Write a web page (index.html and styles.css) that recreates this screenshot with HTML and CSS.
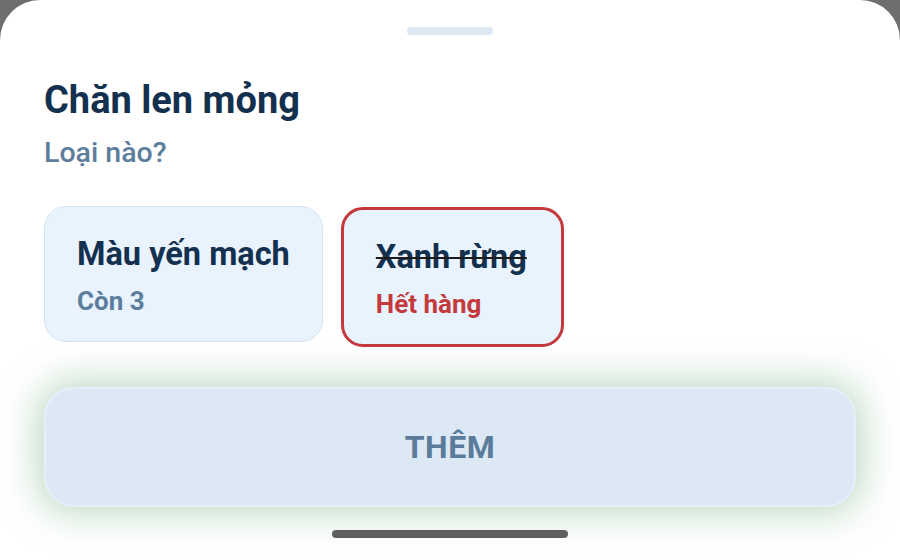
FILE: index.html
```html
<!DOCTYPE html>
<html lang="vi">
<head>
<meta charset="utf-8">
<link rel="stylesheet" href="styles.css">
</head>
<body>
<div class="sheet">
  <div class="handle"></div>
  <h1 class="title">Chăn len mỏng</h1>
  <p class="subtitle">Loại nào?</p>
  <div class="options">
    <div class="option">
      <div class="opt-name">Màu yến mạch</div>
      <div class="opt-stock">Còn 3</div>
    </div>
    <div class="option option-out">
      <div class="opt-name opt-struck">Xanh rừng</div>
      <div class="opt-stock opt-red">Hết hàng</div>
    </div>
  </div>
  <button class="add-btn">THÊM</button>
  <div class="home-indicator"></div>
</div>
</body>
</html>
```
FILE: styles.css
```css
html, body {
  margin: 0;
  padding: 0;
  width: 900px;
  height: 560px;
  overflow: hidden;
  background: #6e6e6e;
  font-family: Roboto, "Noto Sans", sans-serif;
}
.sheet {
  box-sizing: border-box;
  width: 900px;
  height: 560px;
  background: #ffffff;
  border-radius: 40px 40px 0 0;
  padding: 27px 44px 0;
  display: flex;
  flex-direction: column;
}
.handle {
  align-self: center;
  width: 86px;
  height: 8px;
  border-radius: 4px;
  background: #dce9f5;
}
.title {
  margin: 43px 0 0;
  font-size: 38px;
  line-height: 44px;
  font-weight: 700;
  color: #14304f;
}
.subtitle {
  margin: 14px 0 0;
  font-size: 28.5px;
  line-height: 34px;
  font-weight: 500;
  color: #5d7d9c;
}
.options {
  display: flex;
  align-items: flex-start;
  gap: 18px;
  margin-top: 36px;
}
.option {
  background: #e9f3fd;
  border: 1.5px solid #d3e4f4;
  border-radius: 22px;
  padding: 28px 32px 25px;
}
.option-out {
  border: 3px solid #c3393c;
  margin-top: 1px;
  padding-left: 32px;
  padding-right: 34px;
}
.opt-name {
  font-size: 32.5px;
  line-height: 38px;
  font-weight: 700;
  color: #14304f;
}
.opt-struck {
  text-decoration: line-through;
  text-decoration-thickness: 2px;
  text-decoration-color: #1b1b1b;
}
.opt-stock {
  margin-top: 13px;
  font-size: 26px;
  line-height: 30px;
  font-weight: 700;
  color: #5d7d9c;
}
.opt-red {
  color: #c3393c;
}
.add-btn {
  margin-top: 40px;
  height: 120px;
  width: 100%;
  border: 2px solid #e5eff9;
  border-radius: 30px;
  background: #dce9f5;
  box-shadow: 0 0 36px 6px rgba(120, 180, 135, 0.5);
  font-family: Roboto, "Noto Sans", sans-serif;
  font-size: 32px;
  font-weight: 700;
  letter-spacing: 0.5px;
  color: #5b7b9a;
}
.home-indicator {
  align-self: center;
  margin-top: 23px;
  width: 236px;
  height: 8px;
  border-radius: 4px;
  background: #5f5f5f;
}
```
